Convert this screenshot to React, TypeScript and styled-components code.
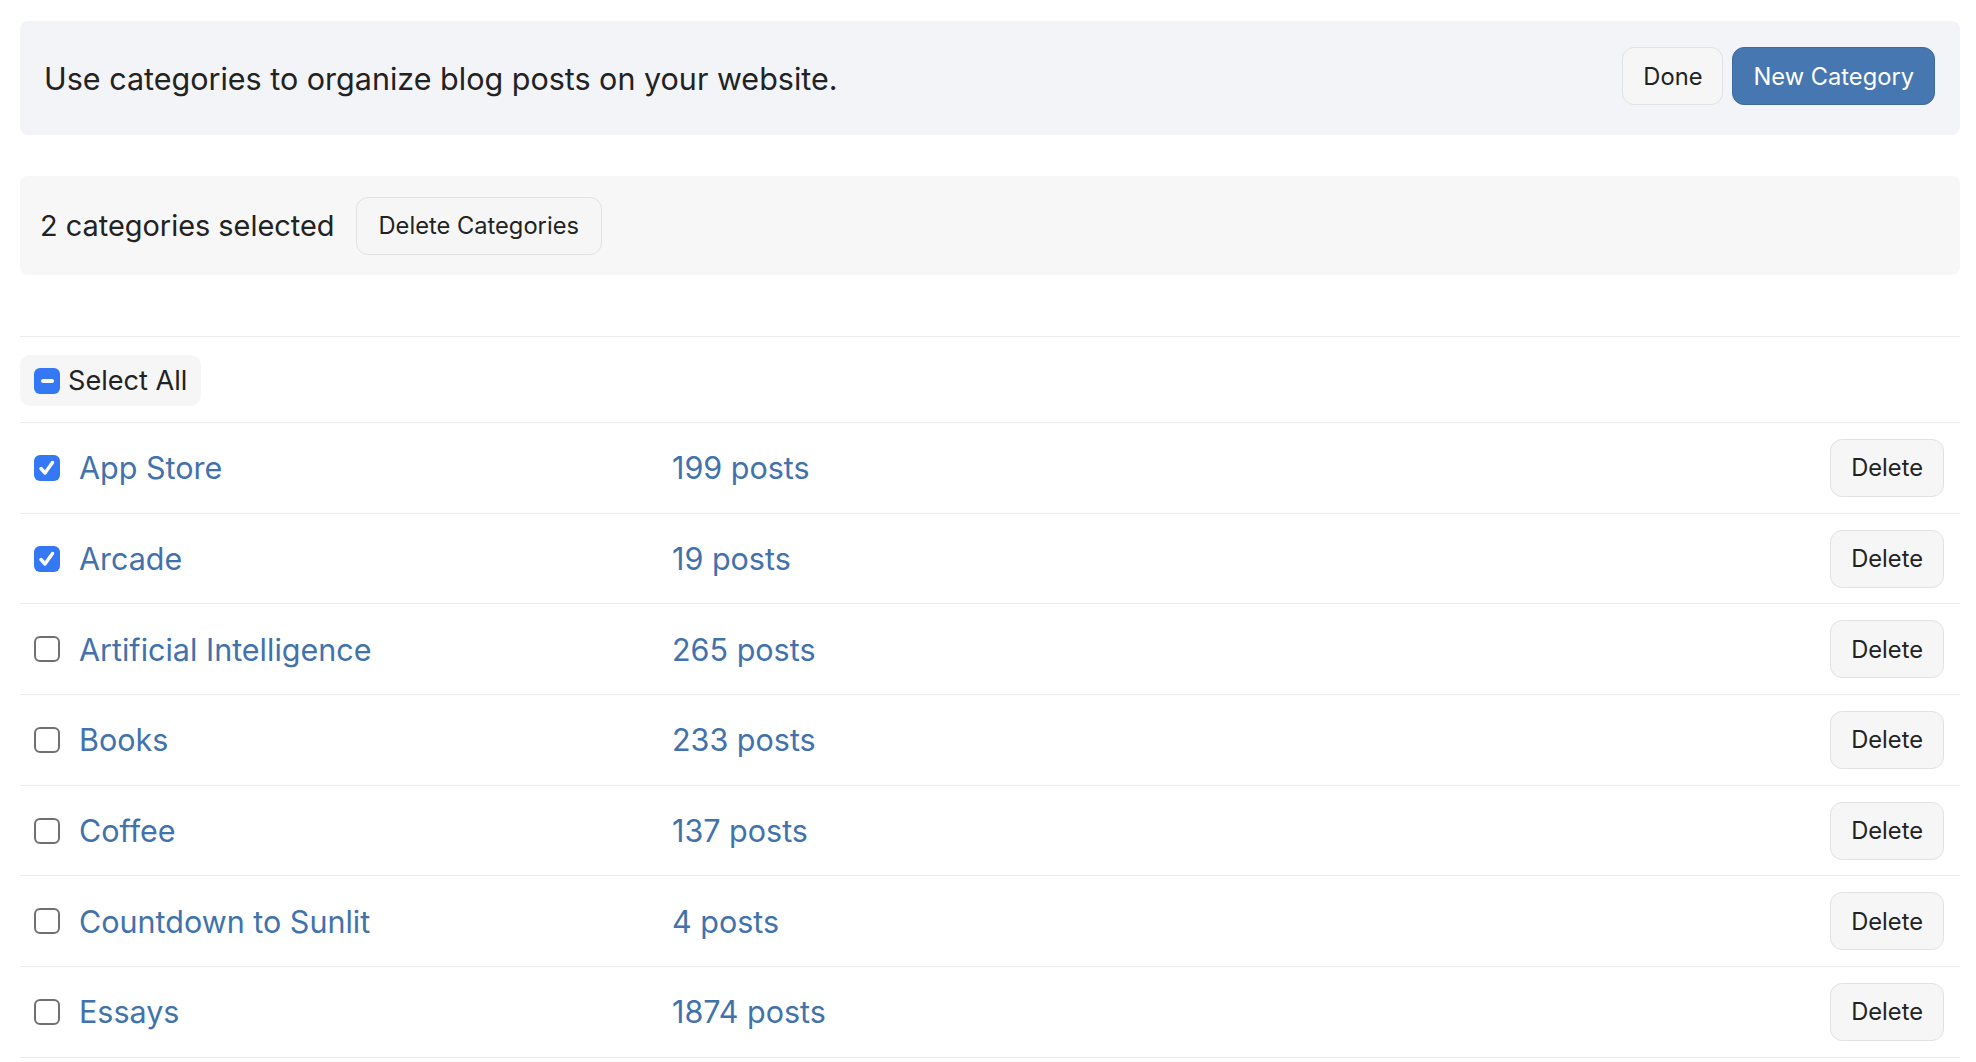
import React from "react";
import styled, { createGlobalStyle } from "styled-components";

const GlobalStyle = createGlobalStyle`
  body {
    margin: 0;
    background: #fff;
    font-family: Inter, "Noto Sans", "Liberation Sans", sans-serif;
    color: #222;
  }
`;

const Page = styled.div`
  padding: 21px 16px 0 20px;
`;

const TopBar = styled.div`
  display: flex;
  align-items: center;
  justify-content: space-between;
  height: 114px;
  padding: 0 25px 0 24px;
  background: #f3f4f8;
  border-radius: 8px;
`;

const Intro = styled.p`
  margin: 0;
  font-size: 30.5px;
  color: #222;
`;

const ButtonGroup = styled.div`
  display: flex;
  gap: 9px;
  margin-bottom: 4px;
`;

const Button = styled.button<{ primary?: boolean; wide?: boolean }>`
  height: 58px;
  padding: 0 ${(p) => (p.wide ? 22 : 20)}px;
  border-radius: 12px;
  font-family: inherit;
  font-size: 23.7px;
  border: 1px solid ${(p) => (p.primary ? "#3d6aa1" : "#e2e2e2")};
  background: ${(p) => (p.primary ? "#4677b0" : "#f6f6f6")};
  color: ${(p) => (p.primary ? "#fff" : "#222")};
  cursor: pointer;
`;

const SelectionBar = styled.div`
  display: flex;
  align-items: center;
  gap: 21px;
  margin-top: 41px;
  height: 99px;
  padding-left: 20px;
  background: #f7f7f7;
  border-radius: 8px;
`;

const SelectionText = styled.span`
  font-size: 28.9px;
`;

const List = styled.div`
  margin-top: 61px;
  border-top: 1px solid #ebebeb;
`;

const SelectAllRow = styled.div`
  display: flex;
  align-items: center;
  height: 85px;
  border-bottom: 1px solid #ebebeb;
`;

const SelectAllPill = styled.label`
  display: flex;
  align-items: center;
  gap: 8px;
  height: 51px;
  padding: 0 14px;
  background: #f6f6f6;
  border-radius: 10px;
  font-size: 27.1px;
  margin-top: 2px;
`;

const Row = styled.div`
  display: grid;
  grid-template-columns: 652px 1fr auto;
  align-items: center;
  height: 89.7px;
  border-bottom: 1px solid #ebebeb;
  padding-right: 16px;
`;

const NameCell = styled.div`
  display: flex;
  align-items: center;
  gap: 19px;
  padding-left: 14px;
`;

const LinkText = styled.a`
  font-size: 30.5px;
  color: #4272ab;
  text-decoration: none;
`;

const Box = styled.span<{ state: "on" | "off" | "mixed" }>`
  display: inline-flex;
  align-items: center;
  justify-content: center;
  flex: none;
  width: 26px;
  height: 26px;
  box-sizing: border-box;
  border-radius: 6px;
  background: ${(p) => (p.state === "off" ? "#fff" : "#3478f6")};
  border: ${(p) => (p.state === "off" ? "2px solid #707070" : "none")};
`;

const Dash = styled.span`
  width: 13px;
  height: 4px;
  border-radius: 2px;
  background: #fff;
`;

function Checkbox({ state }: { state: "on" | "off" | "mixed" }) {
  return (
    <Box state={state}>
      {state === "mixed" && <Dash />}
      {state === "on" && (
        <svg width="20" height="20" viewBox="0 0 20 20">
          <path
            d="M4 10.5 L8 15 L15.5 4.5"
            fill="none"
            stroke="#fff"
            strokeWidth="3.4"
            strokeLinecap="round"
            strokeLinejoin="round"
          />
        </svg>
      )}
    </Box>
  );
}

const categories = [
  { name: "App Store", posts: 199, checked: true },
  { name: "Arcade", posts: 19, checked: true },
  { name: "Artificial Intelligence", posts: 265, checked: false },
  { name: "Books", posts: 233, checked: false },
  { name: "Coffee", posts: 137, checked: false },
  { name: "Countdown to Sunlit", posts: 4, checked: false },
  { name: "Essays", posts: 1874, checked: false },
];

export default function App() {
  return (
    <Page>
      <GlobalStyle />
      <TopBar>
        <Intro>Use categories to organize blog posts on your website.</Intro>
        <ButtonGroup>
          <Button>Done</Button>
          <Button primary>New Category</Button>
        </ButtonGroup>
      </TopBar>

      <SelectionBar>
        <SelectionText>2 categories selected</SelectionText>
        <Button wide>Delete Categories</Button>
      </SelectionBar>

      <List>
        <SelectAllRow>
          <SelectAllPill>
            <Checkbox state="mixed" />
            Select All
          </SelectAllPill>
        </SelectAllRow>
        {categories.map((c) => (
          <Row key={c.name}>
            <NameCell>
              <Checkbox state={c.checked ? "on" : "off"} />
              <LinkText href="#">{c.name}</LinkText>
            </NameCell>
            <LinkText href="#">{c.posts} posts</LinkText>
            <Button>Delete</Button>
          </Row>
        ))}
      </List>
    </Page>
  );
}
